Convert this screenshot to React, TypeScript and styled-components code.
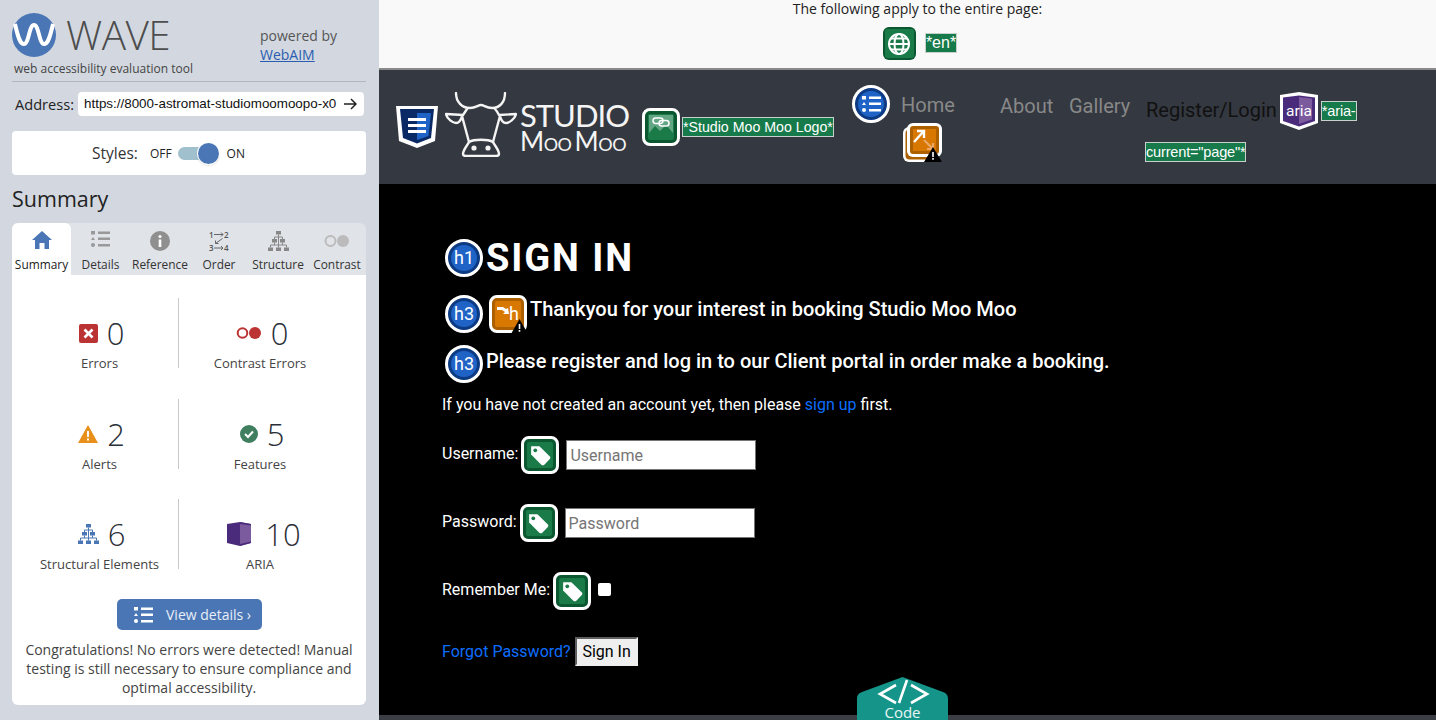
import React from 'react';
import styled, { createGlobalStyle, css } from 'styled-components';

const GlobalStyle = createGlobalStyle`
  html, body { margin: 0; padding: 0; height: 720px; overflow: hidden; background: #000; }
  * { box-sizing: border-box; }
`;

/* ---------- wave badges ---------- */

const palette: Record<string, [string, string]> = {
  green: ['#0b5730', '#1a7a48'],
  blue: ['#0c3b83', '#1f63c6'],
  orange: ['#ad6000', '#d97800'],
};

const Badge = styled.span<{ $tone: string; $round?: boolean }>`
  display: inline-flex;
  flex: none;
  width: 38px;
  height: 38px;
  padding: 3px;
  border: 3px solid #fff;
  border-radius: ${(p) => (p.$round ? '50%' : '8px')};
  background: ${(p) => palette[p.$tone][0]};
  position: relative;
`;

const PageBadge = styled(Badge)`
  width: 33px;
  height: 33px;
  border: none;
  padding: 2px;
  border-radius: 6px;
`;

const BadgeInner = styled.span<{ $tone: string; $round?: boolean }>`
  flex: 1;
  display: flex;
  align-items: center;
  justify-content: center;
  border-radius: ${(p) => (p.$round ? '50%' : '2px')};
  background: ${(p) => palette[p.$tone][1]};
  color: #fff;
  font: 400 18px/1 Roboto, sans-serif;
`;

const WarnMark = styled.svg`
  position: absolute;
  right: -4px;
  bottom: -4px;
`;

const Warn = () => (
  <WarnMark width="17" height="15" viewBox="0 0 17 15">
    <path d="M8.5 0 17 15H0z" fill="#000" />
    <path d="M7.7 5h1.6v5H7.7zM7.7 11h1.6v1.7H7.7z" fill="#fff" />
  </WarnMark>
);

const TagBadge = () => (
  <Badge $tone="green">
    <BadgeInner $tone="green">
      <svg width="25" height="25" viewBox="0 0 24 24">
        <path d="M3 3h8l10 10a2 2 0 0 1 0 2.4l-5.6 5.6a2 2 0 0 1-2.4 0L3 11z" fill="#fff" />
        <circle cx="7" cy="7" r="1.800" fill="#1a7a48" />
      </svg>
    </BadgeInner>
  </Badge>
);

const Heading = ({ level }: { level: string }) => (
  <Badge $tone="blue" $round>
    <BadgeInner $tone="blue" $round>
      {level}
    </BadgeInner>
  </Badge>
);

const Label = styled.span`
  background: #167a4a;
  outline: 1px solid #c8d0cc;
  color: #fff;
  font: 400 14.2px/18px "Liberation Sans", Arial, sans-serif;
`;

const LangLabel = styled(Label)`
  font-size: 16px;
  margin-top: -2px;
`;

/* ---------- sidebar ---------- */

const Page = styled.div`
  display: flex;
  width: 1436px;
  height: 720px;
  overflow: hidden;
  position: relative;
`;

const Sidebar = styled.aside`
  flex: none;
  width: 379px;
  height: 720px;
  padding: 13px 13px 0 12px;
  background: #d3d8e0;
  color: #333;
  font-family: "Open Sans", sans-serif;
`;

const Brand = styled.div`
  display: flex;
  height: 69px;
  border-bottom: 1px solid #b3b7bb;
`;

const BrandMain = styled.div`
  width: 248px;
`;

const BrandTop = styled.div`
  display: flex;
  align-items: center;
  gap: 10px;
  height: 44px;
`;

const WaveName = styled.span`
  font: 300 40.5px/44px "Open Sans", sans-serif;
  color: #4d4d4d;
  letter-spacing: -0.5px;
`;

const Tagline = styled.div`
  margin: 4px 0 0 2px;
  font-size: 12px;
  line-height: 16px;
  color: #444;
`;

const Powered = styled.div`
  margin-top: 13px;
  font-size: 14px;
  line-height: 19px;
  color: #555;
  a {
    color: #2a5db0;
    text-decoration: underline;
  }
`;

const AddressRow = styled.div`
  display: flex;
  align-items: center;
  gap: 4px;
  margin: 10px 2px 0 3px;
  height: 24px;
  font-size: 14.6px;
  color: #222;
`;

const AddressBox = styled.div`
  flex: 1;
  display: flex;
  align-items: center;
  justify-content: space-between;
  height: 24px;
  padding: 0 7px 0 6px;
  border-radius: 4px;
  background: #fff;
  color: #111;
  font: 400 13.400px/24px "Liberation Sans", Arial, sans-serif;
  span {
    white-space: nowrap;
  }
`;

const StylesCard = styled.div`
  display: flex;
  align-items: center;
  margin-top: 15px;
  height: 44px;
  padding-left: 80px;
  border-radius: 4px;
  background: #fff;
`;

const StylesName = styled.span`
  font-size: 15.500px;
  margin-right: 12px;
`;

const Small = styled.span`
  font-size: 12px;
  color: #222;
`;

const Track = styled.span`
  position: relative;
  width: 41px;
  height: 13px;
  margin: 0 8px 0 6px;
  border-radius: 7px;
  background: #9fc0cc;
`;

const Knob = styled.span`
  position: absolute;
  right: 0;
  top: -4px;
  width: 21px;
  height: 21px;
  border-radius: 50%;
  background: #4a76b5;
  box-shadow: 0 0 0 1px #fff, 0 1px 2px rgba(0, 0, 0, 0.4);
`;

const SummaryTitle = styled.h2`
  margin: 11px 0 11px;
  font: 400 21.5px/26px "Open Sans", sans-serif;
  color: #222;
`;

const Tabs = styled.div`
  display: flex;
  height: 52px;
  padding-right: 5px;
  border-radius: 6px 6px 0 0;
  background: #e0e3e8;
`;

const Tab = styled.div<{ $active?: boolean; $w: number }>`
  width: ${(p) => p.$w}px;
  flex: none;
  display: flex;
  flex-direction: column;
  align-items: center;
  padding-top: 7px;
  font-size: 11.900px;
  line-height: 14px;
  color: #333;
  white-space: nowrap;
  ${(p) =>
    p.$active &&
    css`
      background: #fff;
      border-radius: 6px 6px 0 0;
      color: #222;
    `}
`;

const TabSlot = styled.div`
  height: 27px;
  display: flex;
  justify-content: center;
  padding-top: 1px;
`;

const Glyph = styled.svg`
  display: block;
  overflow: visible;
`;

const Panel = styled.div`
  height: 430px;
  padding: 23px 0 0;
  border-radius: 0 0 6px 6px;
  background: #fff;
`;

const StatGrid = styled.div`
  display: grid;
  grid-template-columns: 157px 162px;
  grid-auto-rows: 70px;
  row-gap: 30.5px;
  padding-left: 10px;
`;

const Stat = styled.div<{ $left?: boolean }>`
  display: flex;
  flex-direction: column;
  align-items: center;
  padding-top: 17px;
  ${(p) => p.$left && 'border-right: 1px solid #c8c8c8; padding-right: 1px;'}
`;

const StatTop = styled.div<{ $shift?: number }>`
  display: flex;
  align-items: center;
  gap: 9px;
  height: 36px;
  margin-bottom: 3px;
  margin-left: ${(p) => p.$shift ?? 4}px;
`;

const StatNum = styled.span`
  font: 300 31px/36px "Open Sans", sans-serif;
  color: #2b2f38;
`;

const StatName = styled.span`
  font-size: 13px;
  line-height: 18px;
  color: #444;
  white-space: nowrap;
`;

const Details = styled.div`
  display: flex;
  align-items: center;
  gap: 13px;
  width: 145px;
  height: 31px;
  margin: 30px auto 0 105px;
  padding-left: 17px;
  border-radius: 5px;
  background: #4a76b5;
  color: #e8eef7;
  font-size: 14px;
`;

const Congrats = styled.p`
  margin: 10px 0 0;
  padding: 0 10px;
  text-align: center;
  font-size: 14px;
  line-height: 19px;
  color: #444;
`;

/* ---------- main page ---------- */

const Main = styled.main`
  flex: 1;
  display: flex;
  flex-direction: column;
  min-width: 0;
`;

const TopBar = styled.div`
  flex: none;
  height: 70px;
  padding: 0 0 0 20px;
  border-bottom: 2px solid #8a8a8a;
  background: #f9f9f9;
  text-align: center;
  font: 400 14px/17px "Open Sans", sans-serif;
  color: #222;
`;

const TopIcons = styled.div`
  display: flex;
  justify-content: center;
  align-items: center;
  gap: 10px;
  margin: 10px 0 0 4px;
`;

const Header = styled.header`
  flex: none;
  display: flex;
  height: 114px;
  background: #343840;
  font: 400 20px/24px Roboto, sans-serif;
  color: #888;
`;

const LogoGroup = styled.div`
  flex: none;
  display: flex;
  align-items: center;
  width: 473px;
  padding-left: 17px;
`;

const CowWrap = styled.span`
  display: flex;
  margin: -5px 0 0 7px;
`;

const LogoText = styled.div`
  width: 108px;
  margin: 2px 14px 0 3px;
  color: #f4f4f4;
  font-family: Lato, sans-serif;
`;

const LogoLine = styled.div<{ $size: number; $sp: number; $caps?: boolean }>`
  font-size: ${(p) => p.$size}px;
  letter-spacing: ${(p) => p.$sp}px;
  line-height: 26px;
  white-space: nowrap;
  ${(p) => p.$caps && 'font-variant: small-caps; word-spacing: -3px;'}
`;

const LogoLabel = styled(Label)`
  margin-left: 3px;
`;

const HomeItem = styled.div`
  width: 148px;
  padding-top: 15px;
`;

const HomeTop = styled.div`
  display: flex;
  align-items: center;
  gap: 11px;
`;

const HomeName = styled.span`
  padding-top: 2px;
`;

const ExternalWrap = styled.div`
  margin-left: 51px;
  height: 39px;
`;

const NavLink = styled.a<{ $w: number }>`
  width: ${(p) => p.$w}px;
  padding-top: 24px;
  flex: none;
`;

const RegisterItem = styled.div`
  width: 214px;
  margin-top: 20px;
  font: 400 20px/41px Roboto, sans-serif;
  color: #111;
  ${Label} {
    padding: 1px 0;
    font-size: 14.6px;
    letter-spacing: -0.2px;
    position: relative;
    top: -1px;
  }
`;

const AriaSlot = styled.span`
  display: inline-block;
  vertical-align: middle;
  margin: -1px 4px 0 3px;
  height: 38px;
`;

const Body = styled.section`
  flex: 1;
  padding: 55px 0 0 63px;
  background: #000;
  color: #fff;
  font: 400 16px/19px Roboto, sans-serif;
`;

const HeadRow = styled.div<{ $mb: number }>`
  display: flex;
  align-items: center;
  gap: 3px;
  margin: 0 0 ${(p) => p.$mb}px 3px;
`;

const Title = styled.h1`
  margin: 0;
  font: 700 38px/38px Roboto, sans-serif;
  letter-spacing: 1.9px;
`;

const Sub = styled.h3<{ $lift: number }>`
  margin: 0;
  padding-bottom: ${(p) => p.$lift}px;
  font: 500 20px/24px Roboto, sans-serif;
`;

const FlagSlot = styled.span`
  display: flex;
  margin-left: 3px;
`;

const Intro = styled.p`
  margin: 0 0 22px;
  a {
    color: #0d6efd;
    text-decoration: none;
  }
`;

const FormRow = styled.div<{ $mb: number }>`
  display: flex;
  align-items: center;
  height: 38px;
  margin-bottom: ${(p) => p.$mb}px;
  gap: 7px;
  label {
    margin-right: -4px;
    padding-bottom: 4px;
  }
`;

const TextInput = styled.input`
  width: 190px;
  height: 30px;
  padding: 0 3px;
  border: 1px solid #767676;
  border-radius: 0;
  background: #fff;
  font: 400 16px Roboto, sans-serif;
  &::placeholder {
    color: #757575;
  }
`;

const Check = styled.input`
  width: 13px;
  height: 13px;
  margin: 0 0 4px;
  appearance: none;
  background: #fff;
  border-radius: 2px;
`;

const Forgot = styled.div`
  display: flex;
  align-items: center;
  gap: 4px;
  margin-top: 27px;
  a {
    color: #0d6efd;
    text-decoration: none;
  }
`;

const SignIn = styled.button`
  width: 63px;
  height: 29px;
  padding: 0 0 0 1px;
  border: 2px solid #efefef;
  border-top-color: #5e5e5e;
  border-left-color: #5e5e5e;
  background: #efefef;
  color: #000;
  font: 400 16px Roboto, sans-serif;
`;

const BottomStrip = styled.div`
  flex: none;
  height: 5px;
  background: #3b3f45;
`;

const CodeTab = styled.div`
  position: absolute;
  left: 857px;
  top: 677px;
  width: 91px;
  height: 43px;
  color: #e8f6f4;
  text-align: center;
  font: 400 15px/14px "Open Sans", sans-serif;
  svg {
    position: absolute;
    left: 0;
    top: 0;
  }
  span {
    position: absolute;
    left: 0;
    right: 0;
    top: 28px;
  }
`;

/* ---------- drawings ---------- */

const WaveLogo = () => (
  <svg width="44" height="44" viewBox="0 0 44 44">
    <circle cx="22" cy="22" r="22" fill="#4a76b5" />
    <path d="M3 11C6 24 8 31 12 31 17 31 17 12 22 12 27 12 27 31 32 31 36 31 38 24 41 11" fill="none" stroke="#fff" strokeWidth="4" />
  </svg>
);

const HomeGlyph = () => (
  <Glyph width="20" height="18" viewBox="0 0 20 18">
    <path d="M10 0 20 9h-3v9h-4.500v-6h-5v6H3V9H0z" fill="#4a76b5" />
  </Glyph>
);

const ListGlyph = ({ color }: { color: string }) => (
  <Glyph width="19" height="16" viewBox="0 0 19 16">
    <path d="M0 0h4v3.500H0zM2 6l2 3H0zM7 .5h12v2.500H7zM7 6.500h12V9H7zM7 13h12v2.500H7z" fill={color} />
    <circle cx="2" cy="14" r="2" fill={color} />
  </Glyph>
);

const InfoGlyph = () => (
  <Glyph width="20" height="20" viewBox="0 0 20 20">
    <circle cx="10" cy="10" r="10" fill="#8f8f8f" />
    <path d="M8.700 8.500h2.600V16H8.700z" fill="#fff" />
    <circle cx="10" cy="5.500" r="1.500" fill="#fff" />
  </Glyph>
);

const OrderGlyph = () => (
  <Glyph width="20" height="20" viewBox="0 0 20 20">
    <g fill="#555" fontFamily="'Open Sans', sans-serif" fontSize="8" fontWeight="600">
      <text x="0" y="6.500">1</text>
      <text x="15" y="6.500">2</text>
      <text x="0" y="20">3</text>
      <text x="15" y="20">4</text>
    </g>
    <path d="M5 3.500h9M12 1.500l2 2-2 2M5 17h9M12 15l2 2-2 2M13.500 7.500l-7 5M6.500 9.500v3h3" fill="none" stroke="#666" strokeWidth="1" />
  </Glyph>
);

const TreeGlyph = ({ color }: { color: string }) => (
  <Glyph width="21" height="20" viewBox="0 0 21 20">
    <path d="M8 0h5v3.500H8zM4 8h5v3.500H4zM12 8h5v3.500h-5zM0 16.500h5V20H0zM8 16.500h5V20H8zM16 16.500h5V20h-5z" fill={color} />
    <path d="M10.500 3.500v13M6.500 11.500V14M14.500 11.500V14M2.500 16.500V14h16v2.500M6.500 8V6h8v2" fill="none" stroke={color} strokeWidth="1" />
  </Glyph>
);

const ContrastGlyph = () => (
  <Glyph width="26" height="14" viewBox="0 0 26 14" style={{ marginTop: 3 }}>
    <circle cx="6.500" cy="7" r="5" fill="none" stroke="#bbb" strokeWidth="2" />
    <circle cx="19" cy="7" r="6" fill="#bbb" />
  </Glyph>
);

const AriaShield = () => (
  <svg width="38" height="38" viewBox="0 0 38 38">
    <path d="M19 0l19 3v28l-19 7-19-7V3z" fill="#fff" />
    <path d="M3 5.500 19 3.500 35 5.500V29L19 34.500 3 29z" fill="#4a2a7a" />
    <path d="M19 5l13 1.500v21L19 32z" fill="#7b5a9e" />
    <text x="19" y="24" textAnchor="middle" fill="#fff" fontFamily="Roboto, sans-serif" fontSize="15.500">
      aria
    </text>
  </svg>
);

const CssShield = () => (
  <svg width="42" height="42" viewBox="0 0 42 42">
    <path d="M0 0h42l-3 35-18 7-18-7z" fill="#fff" />
    <path d="M4 3h34l-3 29-14 5.500L7 32z" fill="#0a2a66" />
    <path d="M21 7h14l-2.500 23L21 34z" fill="#1f63c6" />
    <path d="M12 12h18v3H12zM12 18h18v3H12zM12 24h18v3H12z" fill="#fff" />
  </svg>
);

const CowLogo = () => (
  <svg width="72" height="65" viewBox="0 0 72 65" fill="none" stroke="#f4f4f4" strokeWidth="2.400" strokeLinejoin="round" strokeLinecap="round">
    <path d="M11 1c0 9 6 15 14 15 6 0 8-3 11-3s5 3 11 3c8 0 13-6 13-15" />
    <path d="M22 17 18 23 1 22c1 5 7 9 10 9 3 0 5-3 6-7l7 26" />
    <path d="M50 17c2 2 3 4 4 6l17-1c-1 5-7 9-10 9-3 0-5-3-6-7l-7 26" />
    <path d="M24 50c-2 4-6 8-6 12 0 1 1 2 3 2h30c2 0 3-1 3-2 0-4-4-8-6-12-5-3-19-3-24 0z" />
    <circle cx="29" cy="56" r="1.400" fill="#f4f4f4" />
    <circle cx="43" cy="56" r="1.400" fill="#f4f4f4" />
  </svg>
);

const ImageLink = () => (
  <svg width="26" height="26" viewBox="0 0 26 26">
    <path d="M1 1h24v24H1z" fill="#62a684" />
    <path d="M1 25v-6l6-7 5 5 6-6 7 8v6z" fill="#1a7a48" />
    <rect x="5" y="4" width="10" height="5.500" rx="2.700" fill="none" stroke="#fff" strokeWidth="1.500" />
    <rect x="11" y="6.500" width="10" height="5.500" rx="2.700" fill="none" stroke="#fff" strokeWidth="1.500" />
  </svg>
);

const ExternalBadge = () => (
  <svg width="39" height="39" viewBox="0 0 39 39">
    <rect x="0" y="4" width="35" height="35" rx="6" fill="#fff" />
    <rect x="2.500" y="6.500" width="30" height="30" rx="4" fill="#ad6000" />
    <rect x="4" y="0" width="35" height="34" rx="6" fill="#fff" />
    <rect x="7" y="3" width="29" height="28" rx="3" fill="#ad6000" />
    <rect x="10" y="6" width="23" height="22" fill="#d97800" />
    <path d="M21 17 30 26M24 26h6v-6" fill="none" stroke="#eda96a" strokeWidth="2" />
    <path d="M11 19 20 9M14 8h7v7" fill="none" stroke="#fff" strokeWidth="2.400" />
    <path d="M30 24l9 15H21z" fill="#000" />
    <path d="M29.200 29h1.600v5h-1.600zM29.200 35h1.600v1.700h-1.600z" fill="#fff" />
  </svg>
);

const HeadingFlag = () => (
  <Badge $tone="orange">
    <BadgeInner $tone="orange">
      <svg width="13" height="12" viewBox="0 0 13 12" style={{ marginRight: -1, marginTop: -4 }}>
        <path d="M0 1h6l3 2 2-1 1 6-6 0 2-2-3-2H0z" fill="#fff" />
      </svg>
      <span>h</span>
    </BadgeInner>
    <Warn />
  </Badge>
);

const tabs = [
  { name: 'Summary', w: 59, icon: <HomeGlyph />, active: true },
  { name: 'Details', w: 59, icon: <ListGlyph color="#999" /> },
  { name: 'Reference', w: 60, icon: <InfoGlyph /> },
  { name: 'Order', w: 58, icon: <OrderGlyph /> },
  { name: 'Structure', w: 60, icon: <TreeGlyph color="#888" /> },
  { name: 'Contrast', w: 58, icon: <ContrastGlyph /> },
];

const stats = [
  {
    name: 'Errors',
    num: '0',
    icon: (
      <svg width="19" height="19" viewBox="0 0 19 19">
        <rect width="19" height="19" rx="2" fill="#bb3333" />
        <path d="M5.500 5.500l8 8M13.500 5.500l-8 8" stroke="#fff" strokeWidth="2.600" />
      </svg>
    ),
  },
  {
    name: 'Contrast Errors',
    num: '0',
    icon: (
      <svg width="26" height="14" viewBox="0 0 26 14">
        <circle cx="6.500" cy="7" r="4.800" fill="none" stroke="#bb3333" strokeWidth="2" />
        <circle cx="19" cy="7" r="6" fill="#bb3333" />
      </svg>
    ),
  },
  {
    name: 'Alerts',
    num: '2',
    icon: (
      <svg width="20" height="18" viewBox="0 0 20 18">
        <path d="M10 0l10 18H0z" fill="#e8901a" />
        <path d="M9 6h2v6H9zM9 13.500h2v2H9z" fill="#fff" />
      </svg>
    ),
  },
  {
    name: 'Features',
    num: '5',
    icon: (
      <svg width="18" height="18" viewBox="0 0 18 18">
        <circle cx="9" cy="9" r="9" fill="#3f7f5f" />
        <path d="M5 9l3 3 5-5.500" fill="none" stroke="#fff" strokeWidth="2" />
      </svg>
    ),
  },
  { name: 'Structural Elements', num: '6', icon: <TreeGlyph color="#4a76b5" /> },
  {
    name: 'ARIA',
    num: '10',
    shift: 8,
    icon: (
      <svg width="24" height="24" viewBox="0 0 24 24" style={{ marginRight: 5 }}>
        <path d="M0 2l13-2v24L0 21z" fill="#4a2a7a" />
        <path d="M13 0l11 2v19l-11 3z" fill="#7b5a9e" />
        <path d="M13 0l11 2v1.500L13 2zM13 24l11-3v-1.500L13 22z" fill="#4a2a7a" />
      </svg>
    ),
  },
];

export default function App() {
  return (
    <Page>
      <GlobalStyle />
      <Sidebar>
        <Brand>
          <BrandMain>
            <BrandTop>
              <WaveLogo />
              <WaveName>WAVE</WaveName>
            </BrandTop>
            <Tagline>web accessibility evaluation tool</Tagline>
          </BrandMain>
          <Powered>
            powered by
            <br />
            <a href="#webaim">WebAIM</a>
          </Powered>
        </Brand>
        <AddressRow>
          Address:
          <AddressBox>
            <span>https://8000-astromat-studiomoomoopo-x0</span>
            <svg width="13" height="12" viewBox="0 0 13 12" fill="none" stroke="#222" strokeWidth="1.500">
              <path d="M0 6h12M7 1l5 5-5 5" />
            </svg>
          </AddressBox>
        </AddressRow>
        <StylesCard>
          <StylesName>Styles:</StylesName>
          <Small>OFF</Small>
          <Track>
            <Knob />
          </Track>
          <Small>ON</Small>
        </StylesCard>
        <SummaryTitle>Summary</SummaryTitle>
        <Tabs>
          {tabs.map((t) => (
            <Tab key={t.name} $w={t.w} $active={t.active}>
              <TabSlot>{t.icon}</TabSlot>
              {t.name}
            </Tab>
          ))}
        </Tabs>
        <Panel>
          <StatGrid>
            {stats.map((s, i) => (
              <Stat key={s.name} $left={i % 2 === 0}>
                <StatTop $shift={s.shift}>
                  {s.icon}
                  <StatNum>{s.num}</StatNum>
                </StatTop>
                <StatName>{s.name}</StatName>
              </Stat>
            ))}
          </StatGrid>
          <Details>
            <ListGlyph color="#fff" />
            <span>View details ›</span>
          </Details>
          <Congrats>
            Congratulations! No errors were detected! Manual testing is still necessary to ensure
            compliance and optimal accessibility.
          </Congrats>
        </Panel>
      </Sidebar>

      <Main>
        <TopBar>
          The following apply to the entire page:
          <TopIcons>
            <PageBadge $tone="green">
              <BadgeInner $tone="green">
                <svg width="24" height="24" viewBox="0 0 24 24" fill="none" stroke="#fff" strokeWidth="2">
                  <circle cx="12" cy="12" r="10" />
                  <ellipse cx="12" cy="12" rx="4.500" ry="10" />
                  <path d="M2 12h20M4 6.500h16M4 17.500h16" />
                </svg>
              </BadgeInner>
            </PageBadge>
            <LangLabel>*en*</LangLabel>
          </TopIcons>
        </TopBar>

        <Header>
          <LogoGroup>
            <CssShield />
            <CowWrap>
              <CowLogo />
            </CowWrap>
            <LogoText>
              <LogoLine $size={31} $sp={-1}>STUDIO</LogoLine>
              <LogoLine $size={26} $sp={-0.5} $caps>Moo Moo</LogoLine>
            </LogoText>
            <Badge $tone="green">
              <BadgeInner $tone="green">
                <ImageLink />
              </BadgeInner>
            </Badge>
            <LogoLabel>*Studio Moo Moo Logo*</LogoLabel>
          </LogoGroup>
          <HomeItem>
            <HomeTop>
              <Badge $tone="blue" $round>
                <BadgeInner $tone="blue" $round>
                  <ListGlyph color="#fff" />
                </BadgeInner>
              </Badge>
              <HomeName>Home</HomeName>
            </HomeTop>
            <ExternalWrap>
              <ExternalBadge />
            </ExternalWrap>
          </HomeItem>
          <NavLink $w={69}>About</NavLink>
          <NavLink $w={77}>Gallery</NavLink>
          <RegisterItem>
            Register/Login
            <AriaSlot>
              <AriaShield />
            </AriaSlot>
            <Label>*aria-current="page"*</Label>
          </RegisterItem>
        </Header>

        <Body>
          <HeadRow $mb={18}>
            <Heading level="h1" />
            <Title>SIGN IN</Title>
          </HeadRow>
          <HeadRow $mb={12}>
            <Heading level="h3" />
            <FlagSlot>
              <HeadingFlag />
            </FlagSlot>
            <Sub $lift={10}>Thankyou for your interest in booking Studio Moo Moo</Sub>
          </HeadRow>
          <HeadRow $mb={12}>
            <Heading level="h3" />
            <Sub $lift={6}>Please register and log in to our Client portal in order make a booking.</Sub>
          </HeadRow>
          <Intro>
            If you have not created an account yet, then please <a href="#signup">sign up</a> first.
          </Intro>
          <FormRow $mb={30}>
            <label>Username:</label>
            <TagBadge />
            <TextInput placeholder="Username" />
          </FormRow>
          <FormRow $mb={30}>
            <label>Password:</label>
            <TagBadge />
            <TextInput placeholder="Password" />
          </FormRow>
          <FormRow $mb={0}>
            <label>Remember Me:</label>
            <TagBadge />
            <Check type="checkbox" />
          </FormRow>
          <Forgot>
            <a href="#forgot">Forgot Password?</a>
            <SignIn>Sign In</SignIn>
          </Forgot>
        </Body>
        <BottomStrip />
      </Main>

      <CodeTab>
        <svg width="91" height="43" viewBox="0 0 91 43">
          <path d="M0 43V22c0-4 2-6 5-7L45.500 0 86 15c3 1 5 3 5 7v21z" fill="#15958a" />
          <path d="M39 8 23 17l16 9M54 8l16 9-16 9M50 3 42 26" fill="none" stroke="#fff" strokeWidth="2.600" />
        </svg>
        <span>Code</span>
      </CodeTab>
    </Page>
  );
}
